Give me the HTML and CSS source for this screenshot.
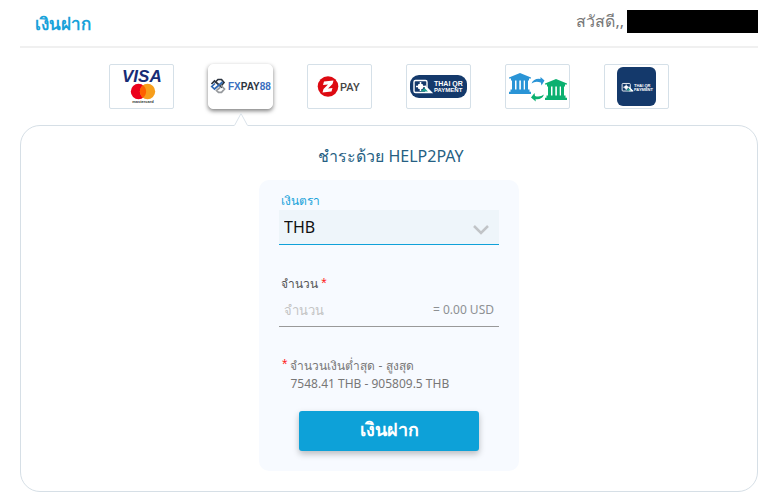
FILE: index.html
```html
<!DOCTYPE html>
<html lang="th">
<head>
    <meta charset="UTF-8">
    <meta name="viewport" content="width=device-width, initial-scale=1.0">
    <title>เงินฝาก</title>
    <link rel="stylesheet" href="styles.css">
</head>
<body>
    <header class="header">
        <h1>เงินฝาก</h1>
        <div class="greeting">สวัสดี,, <span class="user-name"></span></div>
    </header>

    <main>
        <nav class="methods">
            <button type="button" class="method" aria-label="Visa Mastercard">
                <svg viewBox="0 0 63 43">
                    <text x="12" y="17" class="logo-visa">VISA</text>
                    <circle cx="28.5" cy="26.5" r="7.7" fill="#eb001b"/>
                    <circle cx="37.5" cy="26.5" r="7.7" fill="#f79e1b"/>
                    <path d="M33 20.3a7.7 7.7 0 0 1 0 12.4a7.7 7.7 0 0 1 0-12.4z" fill="#ff5f00"/>
                    <text x="33" y="38" class="logo-mc">mastercard</text>
                </svg>
            </button>
            <button type="button" class="method active" aria-label="FXPAY88">
                <svg viewBox="0 0 63 43">
                    <g fill="none" stroke-width="1.7">
                        <path d="M6 17.5L9 14.5H12.5L15 17.5L12.5 20.5" stroke="#2c3440"/>
                        <path d="M2.5 19L5.5 16L13 22.5" stroke="#2c3440"/>
                        <path d="M13.5 17L5.5 24L2.8 21.5L6 18.5" stroke="#3069b3"/>
                        <path d="M12 20.5L15.5 24L12.5 27.3H9.5L7.5 25.5L11 22.5" stroke="#96999d"/>
                    </g>
                    <text x="19" y="25" class="logo-fx"><tspan fill="#3a6fc0">FX</tspan>PAY<tspan fill="#3a6fc0">88</tspan></text>
                </svg>
                <svg class="notch" viewBox="0 0 14 13">
                    <path d="M0 13L7 0L14 13z" fill="#fff"/>
                    <path d="M.5 12.5L7 .5L13.5 12.5" fill="none" stroke="#dbe3ea"/>
                </svg>
            </button>
            <button type="button" class="method" aria-label="ZPAY">
                <svg viewBox="0 0 63 43">
                    <circle cx="20" cy="21.5" r="10.3" fill="#dd0a12"/>
                    <path d="M16 16.5L25.5 15.5L24.5 19L20 23.5L24.5 23L23.5 26.5L14.5 27.5L15.5 24L20 19.5L15 20z" fill="#fff"/>
                    <text x="32" y="26" class="logo-zpay">PAY</text>
                </svg>
            </button>
            <button type="button" class="method" aria-label="Thai QR Payment">
                <svg viewBox="0 0 63 43">
                    <rect x="3" y="10" width="57" height="23" rx="9" fill="#14396b"/>
                    <g id="qr-mark">
                        <path d="M8.5 15.5H18.5Q20 15.5 20 17V23L24.5 27.5H8.5Q7 27.5 7 26V17Q7 15.5 8.5 15.5z" fill="none" stroke="#fff" stroke-width="1.4"/>
                        <path d="M13.5 17V26M9 21.5H18" stroke="#fff" stroke-width="1.6"/>
                        <rect x="11" y="19" width="5" height="5" rx="1" fill="#fff"/>
                        <path d="M18 20L25 28H18z" fill="#fff"/>
                        <path d="M13.5 26.5L17.5 23L21 26.5z" fill="#1fa08c"/>
                    </g>
                    <text x="27" y="21" class="logo-qr">THAI QR</text>
                    <text x="27" y="27" class="logo-qr small">PAYMENT</text>
                </svg>
            </button>
            <button type="button" class="method" aria-label="Bank transfer">
                <svg viewBox="0 0 63 43">
                    <path id="bank" d="M3 13.5V12.5L14 8L25 12.5V13.5zM5 13.5H23V15.5H5zM6 15.5H9V24.5H6zM10.5 15.5H13.3V24.5H10.5zM14.9 15.5H17.7V24.5H14.9zM19 15.5H22V24.5H19zM4.5 24.5H23.5V26.7H4.5zM3 26.7H25V29H3z" class="bank-blue"/>
                    <path transform="translate(36 6)" d="M3 13.5V12.5L14 8L25 12.5V13.5zM5 13.5H23V15.5H5zM6 15.5H9V24.5H6zM10.5 15.5H13.3V24.5H10.5zM14.9 15.5H17.7V24.5H14.9zM19 15.5H22V24.5H19zM4.5 24.5H23.5V26.7H4.5zM3 26.7H25V29H3z" class="bank-green"/>
                    <path d="M25.5 18.5Q28 13 34.5 14V12L38.5 15.5L35.5 20.5L34.8 17.5Q29.5 15.5 25.5 18.5z" class="bank-blue"/>
                    <path d="M38 29.5Q36 35 29.5 34.2L29.8 36.5L25 32.5L28.5 28L29 31Q34 32.5 38 29.5z" class="bank-green"/>
                </svg>
            </button>
            <button type="button" class="method" aria-label="Thai QR">
                <svg viewBox="0 0 63 43">
                    <rect x="12" y="2" width="39" height="39" rx="6" fill="#14396b"/>
                    <use href="#qr-mark" transform="translate(12.7 8.7) scale(.63)"/>
                    <text x="29" y="22" class="logo-qr tiny">THAI QR</text>
                    <text x="29" y="26" class="logo-qr tiny">PAYMENT</text>
                </svg>
            </button>
        </nav>

        <section class="panel">
            <h2>ชำระด้วย HELP2PAY</h2>
            <form class="deposit-form">
                <label for="currency" class="label-active">เงินตรา</label>
                <div class="select-wrap">
                    <select id="currency" name="currency">
                        <option>THB</option>
                    </select>
                    <svg class="chevron" viewBox="0 0 16 10"><path d="M1 1L8 8L15 1" fill="none" stroke="#c1c4c7" stroke-width="2.5"/></svg>
                </div>

                <label for="amount">จำนวน <span class="required">*</span></label>
                <div class="amount-row">
                    <input type="text" id="amount" name="amount" placeholder="จำนวน">
                    <span>= 0.00 USD</span>
                </div>

                <div class="limits">
                    <span class="required">*</span>
                    <p>จำนวนเงินต่ำสุด - สูงสุด<br>7548.41 THB - 905809.5 THB</p>
                </div>

                <button type="submit" class="btn">เงินฝาก</button>
            </form>
        </section>
    </main>
</body>
</html>
```
FILE: styles.css
```css
* {
    box-sizing: border-box;
}

body {
    margin: 0;
    padding: 0 18px 6px 20px;
    font-family: "Noto Sans", "Open Sans", sans-serif;
    background: #fff;
    color: #777;
}

.header {
    display: flex;
    justify-content: space-between;
    align-items: center;
    height: 48px;
    padding-left: 15px;
    border-bottom: 2px solid #f0f0f0;
}

h1 {
    margin: 0;
    font-size: 17px;
    color: #18a2da;
}

.greeting {
    display: flex;
    align-items: center;
    gap: 3px;
    margin-top: -3px;
    font-size: 16px;
}

.user-name {
    width: 131px;
    height: 23px;
    background: #000;
}

.methods {
    display: flex;
    justify-content: center;
    gap: 34px;
    padding: 16px 0;
}

.method {
    position: relative;
    width: 65px;
    height: 45px;
    padding: 0;
    border: 1px solid #d5e0e8;
    border-radius: 2px;
    background: #fff;
    cursor: pointer;
}

.method svg {
    display: block;
    width: 100%;
}

.method.active {
    border-color: #fff;
    border-radius: 5px;
    box-shadow: 0 2px 4px rgba(0, 0, 0, 0.5);
}

.method .notch {
    position: absolute;
    top: 48px;
    left: 25px;
    width: 14px;
    height: 13px;
}

.method text {
    font-family: "Liberation Sans", Arial, sans-serif;
    font-weight: bold;
}

.method .logo-visa {
    font-size: 17px;
    font-style: italic;
    fill: #172b75;
}

.method .logo-mc {
    font-size: 4px;
    text-anchor: middle;
    fill: #333;
}

.method .logo-fx {
    font-size: 10px;
    fill: #2c3440;
}

.method .logo-zpay {
    font-family: Roboto, sans-serif;
    font-size: 11px;
    font-weight: 500;
    fill: #444;
}

.method .logo-qr {
    font-size: 7px;
    fill: #fff;
}

.method .logo-qr.small {
    font-size: 6px;
}

.method .logo-qr.tiny {
    font-size: 4px;
}

.bank-blue {
    fill: #2a94d6;
}

.bank-green {
    fill: #0bb070;
}

.panel {
    padding: 19px 20px 20px;
    border: 1px solid #d6dfe6;
    border-radius: 20px;
}

h2 {
    margin: 0 0 13px;
    padding-left: 4px;
    font-size: 16px;
    font-weight: normal;
    line-height: 22px;
    text-align: center;
    color: #265f83;
}

.deposit-form {
    display: flex;
    flex-direction: column;
    max-width: 260px;
    margin: 0 auto;
    padding: 12px 20px 20px;
    border-radius: 10px;
    background: #f7faff;
    font-size: 12px;
}

label {
    padding-left: 2px;
    line-height: 18px;
    color: #555;
}

.label-active {
    color: #18a2da;
}

.required {
    font-family: "Liberation Sans", Arial, sans-serif;
    font-size: 14px;
    line-height: 1;
    color: #f22;
}

.select-wrap {
    position: relative;
    margin-bottom: 30px;
}

select {
    display: block;
    width: 100%;
    height: 35px;
    padding: 0 5px;
    border: 0;
    border-bottom: 1px solid #0fa1d9;
    border-radius: 0;
    background: #eef5fa;
    font-family: inherit;
    font-size: 16px;
    color: #111;
    appearance: none;
}

.chevron {
    position: absolute;
    top: 15px;
    right: 10px;
    width: 16px;
    height: 10px;
    pointer-events: none;
}

.amount-row {
    display: flex;
    align-items: center;
    height: 34px;
    margin-bottom: 30px;
    padding: 0 5px;
    border-bottom: 1px solid #999;
    color: #8d9093;
}

.amount-row input {
    flex: 1;
    min-width: 0;
    padding: 0;
    border: 0;
    outline: 0;
    background: none;
    font-family: inherit;
    font-size: 13px;
}

.amount-row input::placeholder {
    color: #c4c4c4;
}

.limits {
    display: flex;
    gap: 3px;
    margin-bottom: 18px;
    padding-left: 3px;
    line-height: 18px;
}

.limits p {
    margin: 0;
}

.btn {
    height: 40px;
    margin: 0 20px;
    padding: 0 0 3px;
    border: 0;
    border-radius: 3px;
    background: #0da1d8;
    box-shadow: 0 3px 6px rgba(0, 0, 0, 0.25);
    font-family: inherit;
    font-size: 18px;
    font-weight: bold;
    color: #fff;
    cursor: pointer;
}
```
